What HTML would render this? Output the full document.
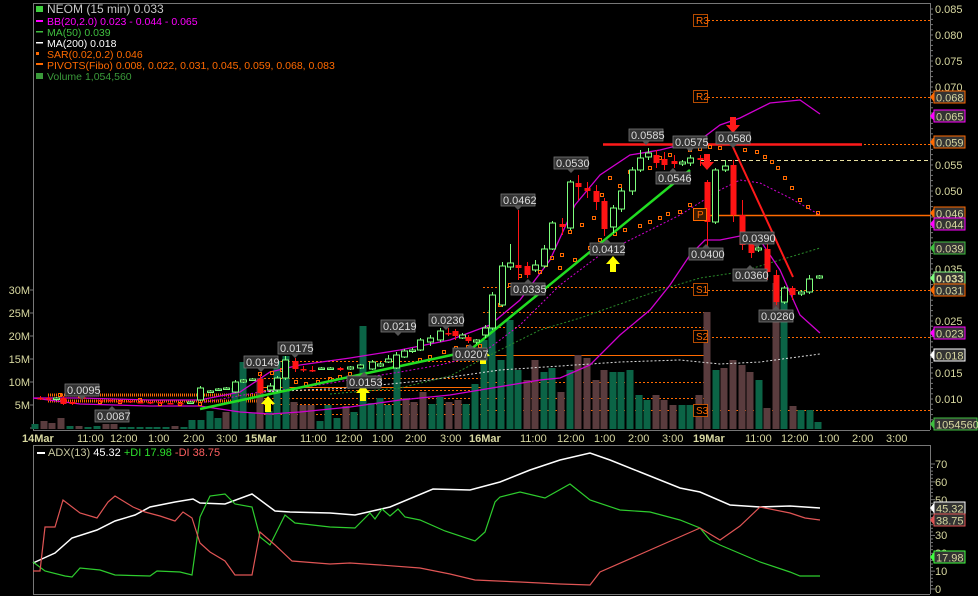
<!DOCTYPE html>
<html><head><meta charset="utf-8">
<style>
html,body{margin:0;padding:0;background:#000;}
svg{display:block;}
text{font-family:"Liberation Sans",sans-serif;}
</style></head>
<body>
<svg id="s" width="978" height="596" viewBox="0 0 978 596" xmlns="http://www.w3.org/2000/svg">
<rect width="978" height="596" fill="#000"/>
<line x1="33" y1="3.5" x2="930" y2="3.5" stroke="#777"/>
<line x1="33.5" y1="3" x2="33.5" y2="430" stroke="#777"/>
<line x1="930.5" y1="3" x2="930.5" y2="430" stroke="#777"/>
<line x1="33" y1="430.5" x2="930" y2="430.5" stroke="#777"/>
<line x1="33" y1="445.5" x2="930" y2="445.5" stroke="#777"/>
<line x1="33.5" y1="445" x2="33.5" y2="594" stroke="#777"/>
<line x1="930.5" y1="445" x2="930.5" y2="594" stroke="#777"/>
<line x1="33" y1="594.5" x2="930" y2="594.5" stroke="#777"/>
<g id="ticks"></g>
<g id="pivots" stroke="#ff6a00" stroke-dasharray="2,2" stroke-width="1">
<line x1="700" y1="20.5" x2="930" y2="20.5"/>
<line x1="700" y1="97.5" x2="930" y2="97.5"/>
<line x1="700" y1="144.5" x2="930" y2="144.5"/>
<line x1="700" y1="290.5" x2="930" y2="290.5"/>
<line x1="700" y1="337.5" x2="930" y2="337.5"/>
<line x1="700" y1="410.5" x2="930" y2="410.5"/>
<line x1="483" y1="287.5" x2="706" y2="287.5"/>
<line x1="483" y1="312.5" x2="706" y2="312.5"/>
<line x1="483" y1="327.5" x2="706" y2="327.5"/>
<line x1="483" y1="382.5" x2="706" y2="382.5"/>
<line x1="483" y1="398.5" x2="706" y2="398.5"/>
<line x1="483" y1="410.5" x2="706" y2="410.5"/>
<line x1="260" y1="361.5" x2="483" y2="361.5"/>
<line x1="260" y1="378.5" x2="483" y2="378.5"/>
<line x1="260" y1="390.5" x2="483" y2="390.5"/>
<line x1="260" y1="398.5" x2="483" y2="398.5"/>
<line x1="260" y1="404.5" x2="483" y2="404.5"/>
<line x1="260" y1="414.5" x2="483" y2="414.5"/>
</g>
<g stroke="#ff6a00" stroke-width="1.5">
<line x1="48" y1="395" x2="260" y2="395" stroke-dasharray="1,1" stroke-width="3"/>
<line x1="48" y1="401" x2="260" y2="401" stroke-dasharray="1,1" stroke-width="3"/>
<line x1="700" y1="215.5" x2="930" y2="215.5"/>
<line x1="483" y1="355.5" x2="706" y2="355.5" stroke-width="1"/>
<line x1="260" y1="387.5" x2="483" y2="387.5" stroke-width="1"/>
</g>
<line x1="603" y1="144.5" x2="862" y2="144.5" stroke="#ff1a1a" stroke-width="2.5"/>
<line x1="700" y1="160.5" x2="930" y2="160.5" stroke="#e8e0a0" stroke-dasharray="4,3"/>
<g id="vol"></g>
<polyline fill="none" stroke="#ddd" stroke-dasharray="2,2" points="260,392 350,388 430,380 500,370 560,366 620,362 680,360 720,364 760,362 820,354"/>
<polyline fill="none" stroke="#2a8a2a" stroke-dasharray="2,2" points="330,394 400,388 450,376 500,350 540,330 580,318 620,304 660,290 700,278 740,272 780,260 820,248"/>
<g fill="none" stroke="#d000d0" stroke-width="1.3">
<polyline points="33,398 80,398 150,400 200,400 240,392 270,372 300,365 350,358 400,350 450,340 490,325 520,300 550,260 575,205 600,175 630,155 660,150 700,140 720,125 740,118 770,103 800,100 820,114"/>
<polyline points="33,398 80,404 150,406 200,406 240,412 270,414 300,412 350,407 400,400 450,395 480,390 510,385 540,380 560,378 590,365 620,335 650,310 670,285 690,255 705,240 720,240 740,236 760,240 780,270 800,315 820,333"/>
</g>
<polyline fill="none" stroke="#d000d0" stroke-dasharray="2,2" points="200,403 260,392 300,388 350,380 400,372 440,365 480,355 520,325 560,285 600,255 640,235 680,215 720,190 740,180 760,183 790,198 820,215"/>
<g id="sar" fill="none" stroke="#ff6a00" stroke-width="1"></g>
<g stroke="#22dd22" stroke-width="2.5">
<line x1="200" y1="409" x2="475" y2="350"/>
<line x1="470" y1="350" x2="690" y2="170"/>
</g>
<line x1="733" y1="147" x2="793" y2="277" stroke="#ff1a1a" stroke-width="2"/>
<g id="candles"></g>
<g fill="#ffff00">
<polygon points="268,396 275,404 271,404 271,412 265,412 265,404 261,404"/>
<polygon points="363,385 370,393 366,393 366,401 360,401 360,393 356,393"/>
<polygon points="483,348 490,356 486,356 486,364 480,364 480,356 476,356"/>
<polygon points="613,256 620,264 616,264 616,272 610,272 610,264 606,264"/>
</g>
<g fill="#ff1a1a">
<polygon points="707,170 714,162 710,162 710,154 704,154 704,162 700,162"/>
<polygon points="733,133 740,125 736,125 736,117 730,117 730,125 726,125"/>
</g>
<g id="labels" font-size="11" fill="#ddd"></g>
<g font-size="10" fill="#ff6a00">
<rect x="693.5" y="14.5" width="14" height="12" fill="#000" stroke="#ff6a00" stroke-width="0.7"/><text x="696" y="24">R3</text>
<rect x="693.5" y="90.5" width="14" height="12" fill="#000" stroke="#ff6a00" stroke-width="0.7"/><text x="696" y="100">R2</text>
<rect x="693.5" y="208.5" width="13" height="12" fill="#3a1a00" stroke="#ff6a00"/><text x="697" y="218">P</text>
<rect x="693.5" y="283.5" width="14" height="12" fill="#000" stroke="#ff6a00" stroke-width="0.7"/><text x="696" y="293">S1</text>
<rect x="693.5" y="330.5" width="14" height="12" fill="#000" stroke="#ff6a00" stroke-width="0.7"/><text x="696" y="340">S2</text>
<rect x="693.5" y="404.5" width="14" height="12" fill="#000" stroke="#ff6a00" stroke-width="0.7"/><text x="696" y="414">S3</text>
</g>
<g font-size="11" fill="#d8d8a0">
<text x="935" y="13">0.085</text><text x="935" y="39">0.080</text><text x="935" y="65">0.075</text><text x="935" y="91">0.070</text>
<text x="935" y="169">0.055</text><text x="935" y="195">0.050</text><text x="935" y="273">0.035</text><text x="935" y="325">0.025</text>
<text x="935" y="377">0.015</text><text x="935" y="403">0.010</text>
</g>
<g id="ptags" font-size="11" fill="#d8d8a0"></g>
<g font-size="11" fill="#d8d8a0" text-anchor="end">
<text x="30" y="294">30M</text><text x="30" y="317">25M</text><text x="30" y="340">20M</text><text x="30" y="363">15M</text><text x="30" y="386">10M</text><text x="30" y="409">5M</text>
</g>
<g font-size="11" fill="#d8d8a0">
<text x="22" y="442" font-weight="bold">14Mar</text>
<text x="77" y="442">11:00</text><text x="110" y="442">12:00</text><text x="148" y="442">1:00</text><text x="183" y="442">2:00</text><text x="216" y="442">3:00</text>
<text x="245" y="442" font-weight="bold">15Mar</text>
<text x="300" y="442">11:00</text><text x="335" y="442">12:00</text><text x="372" y="442">1:00</text><text x="405" y="442">2:00</text><text x="440" y="442">3:00</text>
<text x="469" y="442" font-weight="bold">16Mar</text>
<text x="520" y="442">11:00</text><text x="557" y="442">12:00</text><text x="594" y="442">1:00</text><text x="628" y="442">2:00</text><text x="662" y="442">3:00</text>
<text x="693" y="442" font-weight="bold">19Mar</text>
<text x="745" y="442">11:00</text><text x="781" y="442">12:00</text><text x="818" y="442">1:00</text><text x="852" y="442">2:00</text><text x="886" y="442">3:00</text>
</g>
<g font-size="11" fill="#d8d8a0">
<text x="935" y="468">70</text><text x="935" y="486">60</text><text x="935" y="504">50</text><text x="935" y="575">10</text><text x="935" y="593">0</text>
<text x="935" y="539">30</text><text x="935" y="557">20</text>
</g>
<polyline fill="none" stroke="#fff" stroke-width="1.5" points="33,563 55,553 72,538 97,530 115,521 135,515 150,507 175,502 193,499 200,503 225,504 252,494 275,511 290,512 330,513 355,515 390,507 433,489 470,490 500,482 530,470 560,460 590,453 610,460 640,472 680,488 700,492 730,505 760,507 790,506 820,508"/>
<polyline fill="none" stroke="#2ecc2e" stroke-width="1.2" points="33,562 45,571 65,576 72,577 80,568 100,570 115,575 150,576 157,571 180,572 192,575 200,517 210,496 225,494 235,504 252,507 260,537 270,545 285,515 295,523 330,527 355,528 370,513 375,519 382,509 390,516 398,509 405,517 420,520 445,531 475,541 485,532 495,502 500,497 520,492 545,498 570,484 590,500 620,510 650,512 680,520 700,528 710,540 720,545 760,562 790,572 800,576 810,576 820,576"/>
<polyline fill="none" stroke="#e05555" stroke-width="1.2" points="33,571 40,571 45,527 55,527 63,500 80,513 97,518 108,502 115,496 133,507 145,512 160,516 175,521 183,512 192,518 200,543 210,552 225,561 235,575 252,575 260,532 275,545 292,561 330,564 350,563 380,565 420,568 450,574 475,580 520,582 560,584 590,585 600,572 700,528 720,540 740,526 760,507 790,513 805,518 820,520"/>
<g id="atags" font-size="11" fill="#d8d8a0"></g>
<g font-size="10.5">
<rect x="36" y="6" width="7" height="6" fill="#3fcf3f"/>
<text x="47" y="13" fill="#c8c8c8" font-size="12">NEOM (15 min) 0.033</text>
<rect x="36" y="20" width="7" height="2" fill="#ff00ff"/><text x="47" y="25" fill="#ff00ff">BB(20,2.0) 0.023 - 0.044 - 0.065</text>
<rect x="36" y="31" width="7" height="1.5" fill="#3fbf3f"/><text x="47" y="36" fill="#3fbf3f">MA(50) 0.039</text>
<rect x="36" y="42" width="7" height="1.5" fill="#fff"/><text x="47" y="47" fill="#fff">MA(200) 0.018</text>
<rect x="36" y="52" width="3" height="3" fill="#ff6a00"/><text x="47" y="58" fill="#ff6a00">SAR(0.02,0.2) 0.046</text>
<rect x="36" y="63" width="7" height="2" fill="#ff6a00"/><text x="47" y="69" fill="#ff6a00">PIVOTS(Fibo) 0.008, 0.022, 0.031, 0.045, 0.059, 0.068, 0.083</text>
<rect x="36" y="73" width="7" height="6" fill="#3a9a3a"/><text x="47" y="80" fill="#3a9a3a">Volume 1,054,560</text>
</g>
<g font-size="11">
<rect x="37" y="452" width="8" height="2" fill="#fff"/>
<text x="48" y="456" fill="#c8c8a0">ADX(13) <tspan fill="#fff">45.32</tspan> <tspan fill="#2ee02e">+DI 17.98</tspan> <tspan fill="#ff6060">-DI 38.75</tspan></text>
</g>
</svg>
<script>
var NS="http://www.w3.org/2000/svg";
function el(p,t,a,txt){var e=document.createElementNS(NS,t);for(var k in a)e.setAttribute(k,a[k]);if(txt!==undefined)e.textContent=txt;document.getElementById(p).appendChild(e);return e;}
for(var y=9;y<430;y+=5.2){el('ticks','line',{x1:930,x2:y%26<1?935:933,y1:y,y2:y,stroke:'#777'});}
for(var v=0;v<=30;v+=5){var yy=428-v*4.6;el('ticks','line',{x1:30,x2:33,y1:yy,y2:yy,stroke:'#777'});}
for(var a=0;a<=70;a+=2){var yy=589-a*1.786;el('ticks','line',{x1:930,x2:a%10?933:935,y1:yy,y2:yy,stroke:'#777'});}
var vol=[[35,'g',424],[44,'b',421],[52,'b',423],[61,'b',418],[70,'g',426],[79,'b',426],[88,'g',427],[97,'g',426],[106,'b',424],[114,'b',424],[123,'g',427],[131,'g',427],[140,'g',427],[149,'g',427],[157,'g',427],[166,'g',427],[175,'b',426],[184,'g',427],[192,'g',420],[201,'g',420],[210,'g',411],[218,'g',418],[226,'b',412],[235,'g',388],[243,'g',362],[252,'g',413],[260,'b',378],[269,'g',411],[277,'g',361],[286,'g',356],[294,'b',402],[303,'b',405],[311,'b',405],[320,'g',421],[328,'g',405],[337,'g',418],[346,'b',406],[354,'g',412],[363,'g',326],[371,'g',403],[380,'g',398],[388,'g',405],[397,'g',366],[406,'b',398],[414,'b',402],[423,'b',392],[432,'g',404],[440,'g',397],[449,'b',402],[458,'b',400],[466,'g',404],[475,'g',384],[484,'g',340],[492,'g',310],[501,'g',360],[510,'g',320],[518,'g',370],[527,'b',380],[535,'b',360],[544,'g',372],[552,'g',368],[561,'b',392],[570,'g',370],[578,'b',355],[587,'b',358],[596,'b',380],[604,'b',370],[613,'g',372],[621,'g',372],[630,'g',370],[639,'g',395],[647,'g',400],[656,'b',395],[664,'b',400],[673,'b',405],[682,'g',405],[690,'g',405],[699,'b',395],[707,'b',312],[716,'g',370],[724,'b',368],[733,'b',360],[742,'b',365],[750,'b',372],[759,'g',380],[767,'b',408],[776,'b',283],[784,'g',296],[793,'b',406],[801,'g',410],[810,'g',410],[818,'g',422]];
vol.forEach(function(b){el('vol','rect',{x:b[0]-3.5,y:b[2],width:7,height:429-b[2],fill:b[1]=='g'?'#0b6446':'#5a3c3e'});});
var c=[[40,398,398,396,400],[48,398,399,396,401],[56,399,398,397,401],[63,398,404,396,405],[72,402,404,401,405],[82,397,399,396,400],[100,400,400,399,401],[110,400,401,399,402],[120,401,401,400,402],[130,401,402,400,403],[140,402,402,401,403],[150,402,402,401,404],[160,402,403,401,404],[170,403,403,402,404],[180,403,403,402,404],[190,403,402,401,404],[200,400,388,386,401],[210,392,391,390,393],[218,390,389,388,391],[226,389,388,387,390],[235,392,382,380,393],[243,382,380,379,383],[252,380,379,378,381],[260,379,393,374,394],[270,390,386,383,392],[277,390,378,376,392],[285,378,360,356,380],[295,361,369,358,372],[303,369,370,366,372],[312,370,370,366,372],[321,369,368,367,370],[330,369,368,367,370],[340,368,370,367,371],[350,369,367,366,370],[360,368,365,364,369],[372,369,362,360,370],[380,366,364,362,367],[388,362,359,355,363],[396,368,355,352,369],[404,357,351,349,358],[412,351,350,348,353],[420,350,340,338,351],[430,342,338,335,346],[440,340,331,328,342],[448,333,333,328,336],[455,331,336,329,340],[462,338,335,333,339],[468,337,341,335,343],[476,342,340,339,344],[485,335,328,325,338],[492,328,295,292,330],[502,305,266,262,307],[510,267,263,244,270],[518,265,268,210,280],[527,266,275,262,278],[535,270,265,260,272],[544,266,249,245,268],[552,249,223,221,250],[562,224,227,218,235],[570,228,182,180,230],[578,183,187,175,200],[587,188,191,182,198],[596,191,202,185,210],[604,201,229,198,236],[613,227,208,205,233],[621,209,191,188,212],[632,191,170,167,195],[640,170,158,150,172],[648,157,153,148,160],[656,155,163,150,168],[664,159,165,152,170],[674,161,164,155,168],[682,164,162,160,166],[690,163,158,155,166],[700,158,160,155,166],[707,182,222,180,250],[715,222,170,168,224],[725,170,166,160,172],[733,165,215,160,222],[742,215,245,200,250],[751,244,253,232,258],[758,250,248,246,252],[767,249,272,240,280],[776,275,302,270,305],[784,302,288,286,304],[792,288,295,286,300],[801,294,292,290,296],[809,292,279,275,294],[819,278,276,275,279]];
c.forEach(function(k){var up=k[2]<k[1];var col=up?'#7dff7d':'#ff1414';var t=Math.min(k[1],k[2]),h=Math.max(Math.abs(k[1]-k[2]),1.5);
el('candles','line',{x1:k[0]+.5,x2:k[0]+.5,y1:k[3],y2:k[4],stroke:col});
el('candles','rect',up?{x:k[0]-2.5,y:t,width:6,height:h,fill:'#000',stroke:col}:{x:k[0]-2.5,y:t,width:6,height:h,fill:col});});
var sar=[[60,395],[80,396],[100,402],[120,402],[140,400],[160,404],[180,404],[200,404],[260,374],[272,373],[282,370],[296,382],[306,384],[318,382],[330,379],[340,377],[350,374],[420,360],[430,357],[444,352],[456,348],[468,347],[480,346],[492,320],[500,305],[510,285],[520,276],[540,272],[546,265],[552,258],[562,255],[570,232],[582,225],[594,218],[602,195],[610,178],[620,186],[630,172],[640,162],[650,168],[660,158],[670,155],[690,150],[700,149],[710,147],[720,148],[745,150],[757,152],[765,157],[772,162],[778,168],[785,178],[792,188],[800,200],[808,207],[818,213],[560,268],[575,260],[590,248],[600,240],[615,234],[625,230],[640,226],[650,222],[660,218],[668,214],[680,212],[690,205]];
sar.forEach(function(p){el('sar','rect',{x:p[0]-1.5,y:p[1]-1.5,width:3,height:3});});
var L=[['0.0095',82,390,true],['0.0087',112,416,false],['0.0149',261,362,true],['0.0175',295,348,true],['0.0219',398,326,true],['0.0230',446,320,true],['0.0207',470,354,false],['0.0153',364,382,false],['0.0335',528,289,false],['0.0462',518,200,true],['0.0530',571,163,true],['0.0412',607,249,false],['0.0585',646,135,true],['0.0546',673,178,false],['0.0575',690,142,true],['0.0580',733,138,true],['0.0400',706,254,false],['0.0390',757,238,true],['0.0360',750,275,false],['0.0280',776,316,false]];
L.forEach(function(l){var x=l[1]-17,y=l[2]-6;el('labels','rect',{x:x,y:y,width:34,height:12,fill:'#333',stroke:'#777','stroke-width':0.8});
if(l[3])el('labels','polygon',{points:(l[1]-4)+','+(y+12)+' '+(l[1]+4)+','+(y+12)+' '+l[1]+','+(y+16),fill:'#555'});
else el('labels','polygon',{points:(l[1]-4)+','+y+' '+(l[1]+4)+','+y+' '+l[1]+','+(y-4),fill:'#555'});
el('labels','text',{x:x+2,y:y+10},l[0]);});
function tag(g,t,y,c,w,bold){var x=934;el(g,'polygon',{points:(x-4)+','+y+' '+x+','+(y-5)+' '+x+','+(y+5),fill:c});
el(g,'rect',{x:x,y:y-6,width:w,height:12,fill:'#333',stroke:c});var e=el(g,'text',{x:x+2,y:y+4.5},t);if(bold)e.setAttribute('font-weight','bold');}
tag('ptags','0.068',97,'#ff6a00',31);tag('ptags','0.065',116,'#ff00ff',31);tag('ptags','0.059',142,'#ff6a00',31);
tag('ptags','0.046',213,'#ff6a00',31);tag('ptags','0.044',224,'#ff00ff',31);tag('ptags','0.039',248,'#3fbf3f',31);
tag('ptags','0.033',278,'#80ff80',31,true);tag('ptags','0.031',290,'#ff6a00',31);tag('ptags','0.023',333,'#ff00ff',31);
tag('ptags','0.018',355,'#fff',31);tag('ptags','1054560',424,'#3fbf3f',43);
tag('atags','45.32',508,'#fff',31);tag('atags','38.75',520,'#e05555',31);tag('atags','17.98',557,'#3fff3f',31);
</script>
</body></html>
